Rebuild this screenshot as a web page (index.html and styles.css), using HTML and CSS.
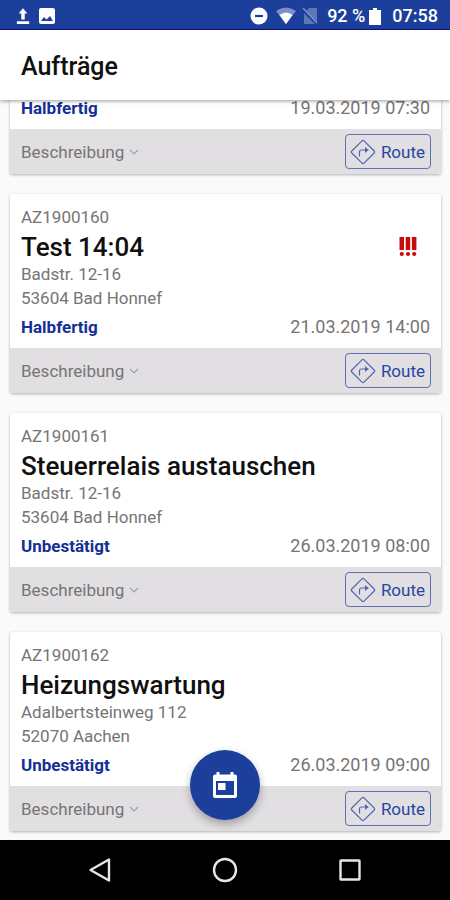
FILE: index.html
```html
<!DOCTYPE html>
<html lang="de">
<head>
<meta charset="utf-8">
<meta name="viewport" content="width=device-width, initial-scale=1">
<title>Aufträge</title>
<link rel="stylesheet" href="styles.css">
</head>
<body>
<svg class="symbols" aria-hidden="true">
  <symbol id="chevron" viewBox="0 0 10 8"><path d="M1 2l4 4 4-4" fill="none" stroke="currentColor" stroke-width="1.2"/></symbol>
  <symbol id="route" viewBox="0 0 26 26"><g fill="none" stroke="currentColor" stroke-width="1.2" stroke-linejoin="round" stroke-linecap="round"><path d="M12 1.8q1-1 2 0L24.200 12q1 1 0 2L14 24.200q-1 1-2 0L1.800 14q-1-1 0-2z"/><path d="M9.500 17v-4q0-2 2-2h6.500"/><path d="M15 8l3.500 3-3.500 3z" fill="currentColor" stroke="none"/></g></symbol>
</svg>
<div class="status-bar">
  <div class="status-group status-left">
    <svg width="14" height="18" viewBox="0 0 16 20" fill="#fff"><path d="M8 1l5 6h-3v7H6V7H3zM1 16h14v3H1z"/></svg>
    <svg width="16" height="16" viewBox="0 0 16 16"><rect width="16" height="16" rx="2" fill="#fff"/><path d="M2 13l3-4 2.500 2.500L11 8l3 5z" fill="#1c3f9b"/></svg>
  </div>
  <div class="status-group">
    <svg width="18" height="18" viewBox="0 0 18 18"><circle cx="9" cy="9" r="8.500" fill="#fff"/><path d="M5 9h8" stroke="#1c3f9b" stroke-width="2.200"/></svg>
    <svg class="wifi" width="20" height="18" viewBox="0 0 20 18"><path d="M0 4q10-7 20 0L10 17z" fill="#7d91c8"/><path d="M3.500 8q6.500-5 13 0L10 17z" fill="#fff"/></svg>
    <svg class="sim" width="16" height="18" viewBox="0 0 16 18"><path d="M2 6l5-5h8v16H2z" fill="#5c76b8"/><path d="M0 2l15 15" stroke="#1c3f9b" stroke-width="3"/><path d="M1 1l14 15" stroke="#7d91c8" stroke-width="1.500"/></svg>
    <span>92 %</span>
    <svg class="battery" width="12" height="17" viewBox="0 0 12 17" fill="#fff"><path d="M4 0h4v2h4v15H0V2h4z"/></svg>
    <span>07:58</span>
  </div>
</div>
<header class="app-bar"><h1>Aufträge</h1></header>
<div class="content">
  <main class="orders">
    <article class="card">
      <div class="card-body">
        <div class="card-status"><strong>Halbfertig</strong><time>19.03.2019 07:30</time></div>
      </div>
      <div class="card-footer">
        <button class="description" type="button">Beschreibung<svg width="10" height="8"><use href="#chevron"/></svg></button>
        <button class="route" type="button"><svg width="26" height="26"><use href="#route"/></svg>Route</button>
      </div>
    </article>
    <article class="card">
      <div class="card-body">
        <p class="number">AZ1900160</p>
        <div class="title-row">
          <h2>Test 14:04</h2>
          <svg class="priority" width="18" height="20" viewBox="0 0 18 20" fill="#c80a0f" role="img" aria-label="Dringend"><path d="M.500 0h4.500v13H.500zM6.700 0h4.500v13H6.700zM12.900 0h4.500v13h-4.500z"/><circle cx="2.800" cy="17" r="2.100"/><circle cx="9" cy="17" r="2.100"/><circle cx="15.200" cy="17" r="2.100"/></svg>
        </div>
        <p class="address">Badstr. 12-16<br>53604 Bad Honnef</p>
        <div class="card-status"><strong>Halbfertig</strong><time>21.03.2019 14:00</time></div>
      </div>
      <div class="card-footer">
        <button class="description" type="button">Beschreibung<svg width="10" height="8"><use href="#chevron"/></svg></button>
        <button class="route" type="button"><svg width="26" height="26"><use href="#route"/></svg>Route</button>
      </div>
    </article>
    <article class="card">
      <div class="card-body">
        <p class="number">AZ1900161</p>
        <div class="title-row"><h2>Steuerrelais austauschen</h2></div>
        <p class="address">Badstr. 12-16<br>53604 Bad Honnef</p>
        <div class="card-status"><strong>Unbestätigt</strong><time>26.03.2019 08:00</time></div>
      </div>
      <div class="card-footer">
        <button class="description" type="button">Beschreibung<svg width="10" height="8"><use href="#chevron"/></svg></button>
        <button class="route" type="button"><svg width="26" height="26"><use href="#route"/></svg>Route</button>
      </div>
    </article>
    <article class="card">
      <div class="card-body">
        <p class="number">AZ1900162</p>
        <div class="title-row"><h2>Heizungswartung</h2></div>
        <p class="address">Adalbertsteinweg 112<br>52070 Aachen</p>
        <div class="card-status"><strong>Unbestätigt</strong><time>26.03.2019 09:00</time></div>
      </div>
      <div class="card-footer">
        <button class="description" type="button">Beschreibung<svg width="10" height="8"><use href="#chevron"/></svg></button>
        <button class="route" type="button"><svg width="26" height="26"><use href="#route"/></svg>Route</button>
      </div>
    </article>
  </main>
  <button class="fab" type="button" aria-label="Kalender">
    <svg width="24" height="26" viewBox="0 0 24 26"><path fill="#fff" fill-rule="evenodd" d="M3.500 0h3v2.500h11V0h3v2.500H22q2 0 2 2V24q0 2-2 2H2q-2 0-2-2V4.500q0-2 2-2h1.500zM3 9v14h18V9z"/><path fill="#fff" d="M5 11h7.500v7H5z"/></svg>
  </button>
</div>
<nav class="nav-bar">
  <button type="button" aria-label="Zurück"><svg width="24" height="26" viewBox="0 0 24 26"><path d="M21 2.500v21L2.500 13z"/></svg></button>
  <button type="button" aria-label="Startseite"><svg width="26" height="26" viewBox="0 0 26 26"><circle cx="13" cy="13" r="11"/></svg></button>
  <button type="button" aria-label="Übersicht"><svg width="24" height="24" viewBox="0 0 24 24"><rect x="2.500" y="2.500" width="19" height="19" rx=".5"/></svg></button>
</nav>
</body>
</html>
```
FILE: styles.css
```css
* { box-sizing: border-box; }

body {
  margin: 0;
  height: 100vh;
  display: flex;
  flex-direction: column;
  overflow: hidden;
  background: #fafafa;
  color: #757575;
  font: 17px/24px Roboto, "Liberation Sans", sans-serif;
}

h1, h2, p { margin: 0; }

svg { display: block; flex: none; }

button {
  margin: 0;
  padding: 0;
  border: 0;
  background: none;
  color: inherit;
  font: inherit;
  cursor: pointer;
}

.symbols { position: absolute; width: 0; height: 0; }

.status-bar {
  flex: none;
  height: 30px;
  padding: 3px 12px 0 16px;
  display: flex;
  align-items: center;
  justify-content: space-between;
  background: #1c3f9b;
  border-bottom: 1px solid #120f8c;
  color: #fff;
  font-size: 18px;
  font-weight: 500;
}

.status-group { display: flex; align-items: center; }
.status-left { gap: 9px; }
.wifi { margin-left: 8px; }
.sim { margin: 0 9px 0 6px; }
.battery { margin: 0 11px 0 4px; }

.app-bar {
  flex: none;
  position: relative;
  z-index: 1;
  height: 70px;
  padding: 4px 21px 0;
  display: flex;
  align-items: center;
  background: #fff;
  box-shadow: 0 1px 4px rgba(0, 0, 0, .4);
}

h1 {
  color: #101010;
  font-size: 25px;
  font-weight: 500;
}

.content {
  flex: 1;
  min-height: 0;
  position: relative;
  display: flex;
}

.orders {
  flex: 1;
  padding: 0 9px 9px 10px;
  display: flex;
  flex-direction: column;
  justify-content: flex-end;
  gap: 20px;
  overflow: hidden;
}

.card {
  flex: none;
  background: #fff;
  border-radius: 3px;
  box-shadow: 0 1px 3px rgba(0, 0, 0, .3);
  overflow: hidden;
}

.card-body { padding: 11px 11px 9px; }

.title-row {
  height: 33px;
  padding: 3px 13px 0 0;
  display: flex;
  align-items: center;
  justify-content: space-between;
}

h2 {
  color: #101010;
  font-size: 26px;
  line-height: 30px;
  font-weight: 500;
}

.card-status {
  margin-top: 5px;
  display: flex;
  justify-content: space-between;
}

.card-status strong { color: #142f96; font-weight: 700; }
.card-status time { font-size: 18px; }

.card-footer {
  height: 45px;
  padding: 0 10px 0 11px;
  display: flex;
  align-items: center;
  justify-content: space-between;
  background: #e1dfe2;
}

.description {
  display: flex;
  align-items: center;
  gap: 5px;
  font-size: 18px;
}

.description svg { color: #a0a0a3; }

.route {
  height: 35px;
  padding: 0 5px 0 4px;
  display: flex;
  align-items: center;
  gap: 5px;
  border: 1px solid #5e70b4;
  border-radius: 4px;
  color: #2846a0;
}

.description,
.route { font-size: 17px; }

.route svg { color: #5166b0; }

.fab {
  position: absolute;
  left: 50%;
  bottom: 20px;
  width: 70px;
  height: 70px;
  margin-left: -35px;
  display: flex;
  align-items: center;
  justify-content: center;
  border-radius: 50%;
  background: #1c3f9b;
  box-shadow: 0 4px 8px rgba(0, 0, 0, .3);
}

.nav-bar {
  flex: none;
  height: 60px;
  padding: 0 38px;
  display: flex;
  background: #000;
}

.nav-bar button {
  flex: 1;
  display: flex;
  align-items: center;
  justify-content: center;
}

.nav-bar svg {
  fill: none;
  stroke: #e6e6e6;
  stroke-width: 2.4px;
  stroke-linejoin: round;
}
```
